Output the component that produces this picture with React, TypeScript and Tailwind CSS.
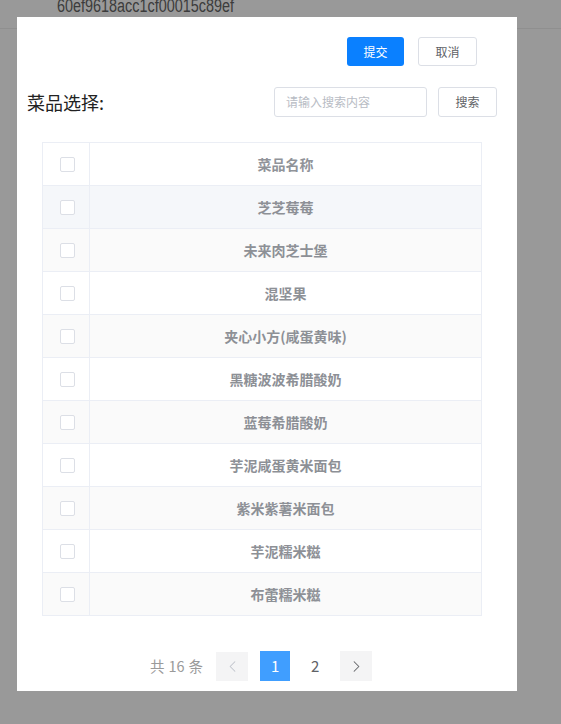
import { ChevronLeft, ChevronRight } from "lucide-react";

const dishes = [
  "芝芝莓莓",
  "未来肉芝士堡",
  "混坚果",
  "夹心小方(咸蛋黄味)",
  "黑糖波波希腊酸奶",
  "蓝莓希腊酸奶",
  "芋泥咸蛋黄米面包",
  "紫米紫薯米面包",
  "芋泥糯米糍",
  "布蕾糯米糍",
];

const cjk = "font-['Noto_Sans_CJK_SC','Noto_Sans',sans-serif]";

function Checkbox() {
  return <span className="block h-[15px] w-[15px] rounded-[2px] border border-[#dcdfe6] bg-white" />;
}

function Row({ name, index }: { name: string; index: number }) {
  // first row is hovered, odd ones are striped
  const bg = index === 0 ? "bg-[#f5f7fa]" : index % 2 === 1 ? "bg-[#fafafa]" : "bg-white";
  return (
    <div className={`flex h-[43px] border-b border-[#ebeef5] ${bg}`}>
      <div className="flex w-[47px] shrink-0 items-center border-r border-[#ebeef5] pl-[17px]">
        <Checkbox />
      </div>
      <div className="flex flex-1 items-center justify-center text-[14px] font-bold text-[#8d9096]">{name}</div>
    </div>
  );
}

export default function App() {
  return (
    <div className={`relative h-[724px] w-[561px] overflow-hidden bg-[#999999] ${cjk}`}>
      {/* page behind the mask */}
      <div className="flex h-[29px] items-end border-b border-[#8f8f8f] pb-[12px]">
        <div className="ml-[57px] origin-left scale-x-[0.8] font-['Liberation_Sans',sans-serif] text-[18px] leading-[20px] text-[#3c3c3c]">
          60ef9618acc1cf00015c89ef
        </div>
      </div>

      {/* dialog */}
      <div className="absolute left-[17px] top-[17px] h-[674px] w-[500px] bg-white">
        <div className="mt-[20px] flex justify-end gap-[14px] pr-[40px]">
          <button className="h-[29px] w-[57px] rounded-[3px] bg-[#0a80ff] text-[12px] text-white">提交</button>
          <button className="h-[29px] w-[59px] rounded-[3px] border border-[#dcdfe6] bg-white text-[12px] text-[#606266]">
            取消
          </button>
        </div>

        <div className="mt-[21px] flex items-center pl-[10px] pr-[20px]">
          <div className="flex-1 text-[18px] text-[#222]">菜品选择:</div>
          <div className="flex h-[30px] w-[153px] items-center rounded-[3px] border border-[#dcdfe6] pl-[11px] text-[12px] text-[#b8bcc4]">
            请输入搜索内容
          </div>
          <button className="ml-[11px] h-[30px] w-[59px] rounded-[3px] border border-[#dcdfe6] bg-white text-[12px] text-[#606266]">
            搜索
          </button>
        </div>

        <div className="ml-[25px] mt-[25px] w-[440px] border-l border-r border-t border-[#ebeef5]">
          <div className="flex h-[43px] border-b border-[#ebeef5] bg-white">
            <div className="flex w-[47px] shrink-0 items-center border-r border-[#ebeef5] pl-[17px]">
              <Checkbox />
            </div>
            <div className="flex flex-1 items-center justify-center text-[14px] font-bold text-[#909399]">菜品名称</div>
          </div>
          {dishes.map((d, i) => (
            <Row key={d} name={d} index={i} />
          ))}
        </div>

        <div className="mt-[35px] flex items-center pl-[133px] text-[14.5px]">
          <span className="mr-[13px] flex gap-[4px] text-[#9a9a9a]">
            <span>共</span>
            <span>16</span>
            <span>条</span>
          </span>
          <span className="flex h-[29px] w-[32px] items-center justify-center bg-[#f4f4f5] text-[#c0c4cc]">
            <ChevronLeft size={19} strokeWidth={1.3} />
          </span>
          <span className="ml-[12px] flex h-[30px] w-[30px] items-center justify-center bg-[#409eff] text-[15px] text-white">
            1
          </span>
          <span className="ml-[10px] flex h-[30px] w-[30px] items-center justify-center text-[15px] text-[#606266]">2</span>
          <span className="ml-[10px] flex h-[30px] w-[32px] items-center justify-center bg-[#f4f4f5] text-[#606266]">
            <ChevronRight size={19} strokeWidth={1.3} />
          </span>
        </div>
      </div>
    </div>
  );
}
